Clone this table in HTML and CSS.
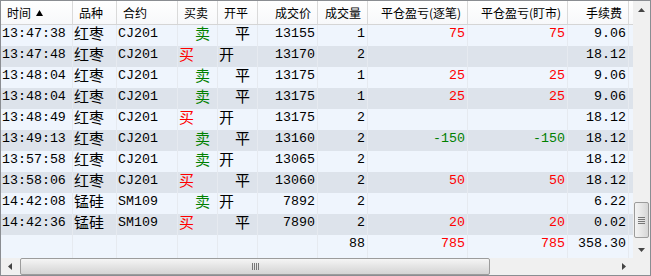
FILE: index.html
```html
<!DOCTYPE html>
<html lang="zh-CN">
<head>
<meta charset="utf-8">
<title>成交明细</title>
<link rel="stylesheet" href="styles.css">
</head>
<body>
<div class="frame">
  <div class="main">
    <div class="table">
      <div class="row hdr">
        <div class="h">时间 <svg class="sort" width="7" height="6" viewBox="0 0 7 6"><polygon points="0,6 3.5,0 7,6" fill="#000"/></svg></div>
        <div class="h">品种</div>
        <div class="h">合约</div>
        <div class="h">买卖</div>
        <div class="h">开平</div>
        <div class="h r">成交价</div>
        <div class="h r">成交量</div>
        <div class="h r">平仓盈亏(逐笔)</div>
        <div class="h r">平仓盈亏(盯市)</div>
        <div class="h r">手续费</div>
        <div class="h fill"></div>
      </div>

      <div class="row odd">
        <div class="c mono">13:47:38</div><div class="c cn">红枣</div><div class="c mono">CJ201</div>
        <div class="c cn ind green">卖</div><div class="c cn ind">平</div>
        <div class="c mono num">13155</div><div class="c mono num">1</div>
        <div class="c mono num red">75</div><div class="c mono num red">75</div>
        <div class="c mono num">9.06</div><div class="c fill"></div>
      </div>
      <div class="row even">
        <div class="c mono">13:47:48</div><div class="c cn">红枣</div><div class="c mono">CJ201</div>
        <div class="c cn red">买</div><div class="c cn">开</div>
        <div class="c mono num">13170</div><div class="c mono num">2</div>
        <div class="c mono num"></div><div class="c mono num"></div>
        <div class="c mono num">18.12</div><div class="c fill"></div>
      </div>
      <div class="row odd">
        <div class="c mono">13:48:04</div><div class="c cn">红枣</div><div class="c mono">CJ201</div>
        <div class="c cn ind green">卖</div><div class="c cn ind">平</div>
        <div class="c mono num">13175</div><div class="c mono num">1</div>
        <div class="c mono num red">25</div><div class="c mono num red">25</div>
        <div class="c mono num">9.06</div><div class="c fill"></div>
      </div>
      <div class="row even">
        <div class="c mono">13:48:04</div><div class="c cn">红枣</div><div class="c mono">CJ201</div>
        <div class="c cn ind green">卖</div><div class="c cn ind">平</div>
        <div class="c mono num">13175</div><div class="c mono num">1</div>
        <div class="c mono num red">25</div><div class="c mono num red">25</div>
        <div class="c mono num">9.06</div><div class="c fill"></div>
      </div>
      <div class="row odd">
        <div class="c mono">13:48:49</div><div class="c cn">红枣</div><div class="c mono">CJ201</div>
        <div class="c cn red">买</div><div class="c cn">开</div>
        <div class="c mono num">13175</div><div class="c mono num">2</div>
        <div class="c mono num"></div><div class="c mono num"></div>
        <div class="c mono num">18.12</div><div class="c fill"></div>
      </div>
      <div class="row even">
        <div class="c mono">13:49:13</div><div class="c cn">红枣</div><div class="c mono">CJ201</div>
        <div class="c cn ind green">卖</div><div class="c cn ind">平</div>
        <div class="c mono num">13160</div><div class="c mono num">2</div>
        <div class="c mono num green">-150</div><div class="c mono num green">-150</div>
        <div class="c mono num">18.12</div><div class="c fill"></div>
      </div>
      <div class="row odd">
        <div class="c mono">13:57:58</div><div class="c cn">红枣</div><div class="c mono">CJ201</div>
        <div class="c cn ind green">卖</div><div class="c cn">开</div>
        <div class="c mono num">13065</div><div class="c mono num">2</div>
        <div class="c mono num"></div><div class="c mono num"></div>
        <div class="c mono num">18.12</div><div class="c fill"></div>
      </div>
      <div class="row even">
        <div class="c mono">13:58:06</div><div class="c cn">红枣</div><div class="c mono">CJ201</div>
        <div class="c cn red">买</div><div class="c cn ind">平</div>
        <div class="c mono num">13060</div><div class="c mono num">2</div>
        <div class="c mono num red">50</div><div class="c mono num red">50</div>
        <div class="c mono num">18.12</div><div class="c fill"></div>
      </div>
      <div class="row odd">
        <div class="c mono">14:42:08</div><div class="c cn">锰硅</div><div class="c mono">SM109</div>
        <div class="c cn ind green">卖</div><div class="c cn">开</div>
        <div class="c mono num">7892</div><div class="c mono num">2</div>
        <div class="c mono num"></div><div class="c mono num"></div>
        <div class="c mono num">6.22</div><div class="c fill"></div>
      </div>
      <div class="row even">
        <div class="c mono">14:42:36</div><div class="c cn">锰硅</div><div class="c mono">SM109</div>
        <div class="c cn red">买</div><div class="c cn ind">平</div>
        <div class="c mono num">7890</div><div class="c mono num">2</div>
        <div class="c mono num red">20</div><div class="c mono num red">20</div>
        <div class="c mono num">0.02</div><div class="c fill"></div>
      </div>
      <div class="row odd">
        <div class="c mono"></div><div class="c cn"></div><div class="c mono"></div>
        <div class="c cn"></div><div class="c cn"></div>
        <div class="c mono num"></div><div class="c mono num">88</div>
        <div class="c mono num red">785</div><div class="c mono num red">785</div>
        <div class="c mono num">358.30</div><div class="c fill"></div>
      </div>
      <div class="row tail">
        <div class="c"></div><div class="c"></div><div class="c"></div><div class="c"></div><div class="c"></div>
        <div class="c"></div><div class="c"></div><div class="c"></div><div class="c"></div><div class="c"></div><div class="c fill"></div>
      </div>
    </div>

    <div class="vscroll">
      <div class="sbtn">
        <svg width="7" height="4" viewBox="0 0 7 4"><polygon points="0,4 3.5,0 7,4" fill="#444"/></svg>
      </div>
      <div class="vtrack">
        <div class="vthumb">
          <svg width="7" height="7" viewBox="0 0 7 7">
            <rect x="0" y="0" width="7" height="1" fill="#777"/>
            <rect x="0" y="2" width="7" height="1" fill="#777"/>
            <rect x="0" y="4" width="7" height="1" fill="#777"/>
            <rect x="0" y="6" width="7" height="1" fill="#777"/>
          </svg>
        </div>
      </div>
      <div class="sbtn">
        <svg width="7" height="4" viewBox="0 0 7 4"><polygon points="0,0 7,0 3.5,4" fill="#444"/></svg>
      </div>
    </div>
  </div>

  <div class="bottom">
    <div class="hscroll">
      <div class="sbtn h-btn">
        <svg width="4" height="7" viewBox="0 0 4 7"><polygon points="4,0 4,7 0,3.5" fill="#444"/></svg>
      </div>
      <div class="hthumb">
        <svg width="7" height="7" viewBox="0 0 7 7">
          <rect x="0" y="0" width="1" height="7" fill="#777"/>
          <rect x="2" y="0" width="1" height="7" fill="#777"/>
          <rect x="4" y="0" width="1" height="7" fill="#777"/>
          <rect x="6" y="0" width="1" height="7" fill="#777"/>
        </svg>
      </div>
      <div class="htrack"></div>
      <div class="sbtn h-btn">
        <svg width="4" height="7" viewBox="0 0 4 7"><polygon points="0,0 4,3.5 0,7" fill="#444"/></svg>
      </div>
    </div>
    <div class="corner"></div>
  </div>
</div>
</body>
</html>
```

FILE: styles.css
```css
html, body {
  margin: 0;
  padding: 0;
  background: #ffffff;
}

.frame {
  width: 651px;
  height: 276px;
  box-sizing: border-box;
  border: 1px solid #8a8d92;
  display: flex;
  flex-direction: column;
  background: #eff5fd;
}

.main {
  display: flex;
  height: 257px;
}

.table {
  width: 632px;
  display: flex;
  flex-direction: column;
  background: #eff5fd;
}

.row {
  display: grid;
  grid-template-columns: 72px 44px 61px 40px 40px 60px 50px 100px 100px 61px 1fr;
  height: 21px;
}

.row > div {
  box-sizing: border-box;
  white-space: nowrap;
}

/* header */
.hdr {
  height: 24px;
  background: linear-gradient(#ffffff, #f7f8fa);
  border-bottom: 1px solid #d5d5d5;
  box-sizing: border-box;
}

.h {
  border-right: 1px solid #dadada;
  font-family: "Noto Sans CJK SC", "Noto Sans", sans-serif;
  font-size: 12px;
  line-height: 23px;
  color: #000;
  padding-left: 6px;
  display: flex;
  align-items: center;
  gap: 5px;
}

.h.r {
  justify-content: flex-end;
  padding-left: 0;
  padding-right: 6px;
}

.h.fill {
  border-right: none;
}

.sort {
  display: block;
}

/* body */
.odd { background: #eff5fd; }
.even { background: #dde3eb; }
.tail { height: 2px; background: #eff5fd; }

.c {
  border-right: 1px solid #e6eaf0;
  color: #000;
  padding-left: 1px;
}

.c.fill {
  border-right: none;
}

.mono {
  font-family: "Liberation Mono", "DejaVu Sans Mono", monospace;
  font-size: 13.3px;
  line-height: 18px;
}

.cn {
  font-family: "Noto Sans CJK SC", sans-serif;
  font-size: 15px;
  line-height: 16px;
}

.ind {
  padding-left: 17px;
}

.num {
  text-align: right;
  padding-left: 0;
  padding-right: 2px;
}

.red { color: #ff0000; }
.green { color: #008000; }

/* vertical scrollbar */
.vscroll {
  width: 17px;
  display: flex;
  flex-direction: column;
  background: #f0f0f0;
}

.sbtn {
  flex: 0 0 17px;
  height: 17px;
  display: flex;
  align-items: center;
  justify-content: center;
}

.sbtn svg { display: block; }

.vtrack {
  flex: 1;
  display: flex;
  flex-direction: column;
  padding-top: 184px;
}

.vthumb {
  height: 36px;
  margin: 0 1px;
  box-sizing: border-box;
  border: 1px solid #9c9c9c;
  border-radius: 2px;
  background: linear-gradient(to right, #f4f4f4, #e6e6e6 50%, #d6d6d6);
  display: flex;
  align-items: center;
  justify-content: center;
}

/* horizontal scrollbar */
.bottom {
  display: flex;
  height: 17px;
}

.hscroll {
  width: 632px;
  display: flex;
  background: #f0f0f0;
}

.h-btn {
  width: 18px;
  flex: 0 0 18px;
}

.hthumb {
  width: 470px;
  flex: 0 0 470px;
  margin-left: 1px;
  box-sizing: border-box;
  border: 1px solid #9c9c9c;
  border-radius: 2px;
  background: linear-gradient(#f5f5f5, #e4e4e4 50%, #d4d4d4);
  display: flex;
  align-items: center;
  justify-content: center;
}

.htrack {
  flex: 1;
}

.corner {
  width: 17px;
  background: #f0f0f0;
}
```
